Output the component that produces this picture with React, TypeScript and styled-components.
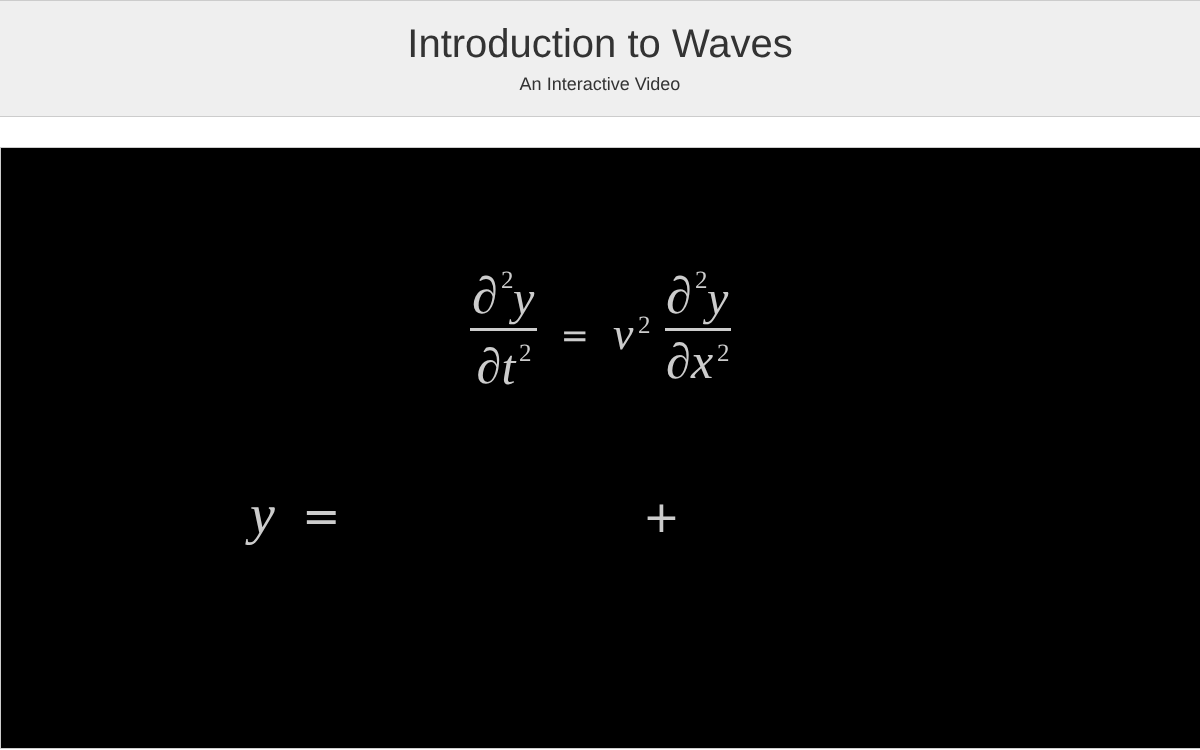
import { createGlobalStyle } from 'styled-components';
import styled from 'styled-components';

const GlobalStyle = createGlobalStyle`
  html, body {
    margin: 0;
    padding: 0;
    background: #fff;
    overflow: hidden;
  }
`;

const Page = styled.div`
  width: 1200px;
  height: 750px;
  font-family: "Liberation Sans", Arial, sans-serif;
  text-rendering: geometricPrecision;
`;

const Header = styled.header`
  box-sizing: border-box;
  height: 117px;
  padding-top: 20px;
  background: #efefef;
  border-top: 1px solid #ccc;
  border-bottom: 1px solid #ccc;
  color: #333;
  text-align: center;
`;

const Title = styled.h1`
  margin: 0;
  font-size: 40px;
  font-weight: 400;
  line-height: 46px;
  will-change: opacity;
`;

const Subtitle = styled.p`
  margin: 5px 0 0;
  font-size: 18px;
  line-height: 25px;
  will-change: opacity;
`;

const Stage = styled.div`
  box-sizing: border-box;
  width: 1200px;
  height: 602px;
  margin-top: 30px;
  border: 1px solid #ccc;
  border-right: none;
  background: #000;
`;

const Board = styled.svg`
  display: block;
  width: 1199px;
  height: 600px;
  font-family: "Liberation Serif", "Times New Roman", serif;
  fill: #ccc;
  will-change: opacity;
`;

const Symbol = styled.text<{ $size: number; $italic?: boolean }>`
  font-size: ${(p) => p.$size}px;
  font-style: ${(p) => (p.$italic ? 'italic' : 'normal')};
`;

const Operator = styled.text<{ $size: number }>`
  font-family: "DejaVu Sans", sans-serif;
  font-size: ${(p) => p.$size}px;
`;

const Rule = styled.rect`
  fill: #ccc;
`;

function Term({ x, y, letter, letterX }: { x: number; y: number; letter: string; letterX: number }) {
  return (
    <>
      <Symbol $size={52} x={x} y={y}>∂</Symbol>
      <Symbol $size={25} x={x + 29} y={y - 25}>2</Symbol>
      <Symbol $size={48} $italic x={letterX} y={y + 1}>{letter}</Symbol>
    </>
  );
}

export default function App() {
  return (
    <Page>
      <GlobalStyle />
      <Header>
        <Title>Introduction to Waves</Title>
        <Subtitle>An Interactive Video</Subtitle>
      </Header>
      <Stage>
        <Board viewBox="1 148 1199 600">
          <Term x={472} y={313} letter="y" letterX={513} />
          <Rule x={470} y={328} width={67} height={3} />
          <Symbol $size={50} x={476.5} y={383}>∂</Symbol>
          <Symbol $size={50} $italic x={501.5} y={384}>t</Symbol>
          <Symbol $size={25} x={519} y={361}>2</Symbol>

          <Operator $size={34} x={560.5} y={346.5}>=</Operator>
          <Symbol $size={46} $italic x={613} y={349}>v</Symbol>
          <Symbol $size={25} x={638} y={333}>2</Symbol>

          <Term x={666} y={313} letter="y" letterX={707} />
          <Rule x={665} y={328} width={66} height={3} />
          <Symbol $size={50} x={666} y={378}>∂</Symbol>
          <Symbol $size={50} $italic x={691} y={378}>x</Symbol>
          <Symbol $size={25} x={717} y={361}>2</Symbol>

          <Symbol $size={56} $italic x={250} y={533}>y</Symbol>
          <Operator $size={46} x={302} y={532}>=</Operator>
          <Operator $size={44} x={643} y={532}>+</Operator>
        </Board>
      </Stage>
    </Page>
  );
}
